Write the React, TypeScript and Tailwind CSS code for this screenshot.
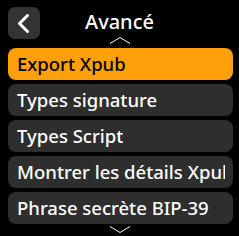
const ITEMS = [
  'Export Xpub',
  'Types signature',
  'Types Script',
  'Montrer les détails Xpub',
  'Phrase secrète BIP-39',
];

export default function App() {
  return (
    <div
      className="w-[239px] h-[236px] bg-black overflow-hidden relative"
      style={{ fontFamily: '"Noto Sans", "Open Sans", sans-serif' }}
    >
      <div className="flex items-center h-[48px] pt-[7px] pb-[9px] px-[8px] relative">
        <div className="w-[32px] h-[32px] rounded-[7px] bg-[#333333] flex items-center justify-center">
          <svg width="32" height="32" viewBox="0 0 32 32">
            <path d="M19.5 8.5 L11.5 16.5 L19.5 24.5" fill="none" stroke="#fff" strokeWidth="3" strokeLinecap="round" strokeLinejoin="round" />
          </svg>
        </div>
        <div className="absolute left-0 right-0 top-[9px] text-center text-white text-[20px] leading-[26px] font-medium">Avancé</div>
        <svg className="absolute left-[110px] top-[37px]" width="20" height="7" viewBox="0 0 20 7">
          <path d="M0 6.5 L10 0.5 L20 6.5" fill="none" stroke="#fff" strokeWidth="1" />
        </svg>
      </div>
      <div className="flex flex-col gap-[4px] px-[8px]">
        {ITEMS.map((t, i) => (
          <div
            key={t}
            className={`h-[32px] w-[225px] rounded-[8px] pl-[9px] pr-[8px] flex items-center ${i === 0 ? 'bg-[#ff9f0a] text-black' : 'bg-[#2e2e2e] text-white'}`}
          >
            <span className="block overflow-hidden whitespace-nowrap text-[18.5px] leading-[24px] font-medium">{t}</span>
          </div>
        ))}
      </div>
      <svg className="absolute left-[110px] top-[226px]" width="20" height="7" viewBox="0 0 20 7">
        <path d="M0 0.5 L10 6.5 L20 0.5" fill="none" stroke="#fff" strokeWidth="1" />
      </svg>
    </div>
  );
}
